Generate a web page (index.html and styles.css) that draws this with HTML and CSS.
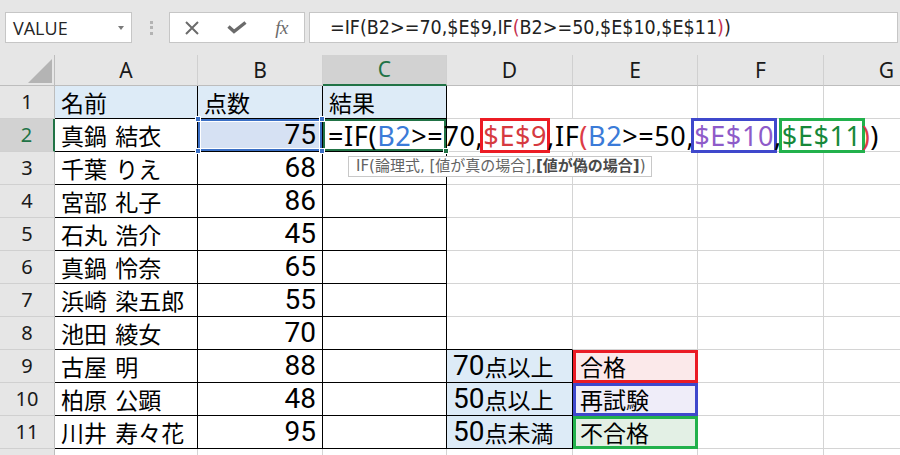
FILE: index.html
```html
<!DOCTYPE html>
<html lang="ja">
<head>
<meta charset="utf-8">
<title>Excel IF</title>
<link rel="stylesheet" href="styles.css">
</head>
<body>
<div class="toolbar">
  <div class="namebox"><span>VALUE</span><span class="caret"></span></div>
  <div class="grip"><i></i><i></i><i></i></div>
  <div class="fbtns">
    <span class="slot"><svg width="16" height="14" viewBox="0 0 16 14"><path d="M2 1 L14 13 M14 1 L2 13" stroke="#6b6b6b" stroke-width="2" fill="none"/></svg></span>
    <span class="slot"><svg width="20" height="13" viewBox="0 0 20 13"><path d="M1.5 5.5 L7 10.5 L18.5 1.5" stroke="#6b6b6b" stroke-width="3.4" fill="none"/></svg></span>
    <span class="slot"><span class="fx">fx</span></span>
  </div>
  <div class="fbar">=IF(B2&gt;=70,$E$9,IF<span class="pr">(</span>B2&gt;=50,$E$10,$E$11<span class="pr">)</span>)</div>
</div>

<div class="sheet">
  <!-- header row -->
  <div class="corner"><span class="tri"></span></div>
  <div class="ch">A</div>
  <div class="ch">B</div>
  <div class="ch sel">C</div>
  <div class="ch">D</div>
  <div class="ch">E</div>
  <div class="ch">F</div>
  <div class="ch">G</div>

  <!-- 1 -->
  <div class="rh">1</div>
  <div class="c t hd">名前</div>
  <div class="c t hd">点数</div>
  <div class="c t hd">結果</div>
  <div class="c"></div><div class="c"></div><div class="c"></div><div class="c"></div>

  <!-- 2 -->
  <div class="rh sel">2</div>
  <div class="c t nm">真鍋 結衣</div>
  <div class="c t num b2">75<i class="hdl tl"></i><i class="hdl tr"></i><i class="hdl bl"></i><i class="hdl br"></i></div>
  <div class="c t f2">
    <div class="formula"><span>=IF(</span><span class="blu">B2</span><span>&gt;=70,</span><span class="ref rr">$E$9</span><span>,IF</span><span class="red">(</span><span class="blu">B2</span><span>&gt;=50,</span><span class="ref rb">$E$10</span><span>,</span><span class="ref rg">$E$11</span><span class="red">)</span><span>)</span></div>
    <i class="fill"></i>
  </div>
  <div class="c nr"></div><div class="c nr"></div><div class="c nr"></div><div class="c nr"></div>

  <!-- 3 -->
  <div class="rh">3</div>
  <div class="c t nm">千葉 りえ</div>
  <div class="c t num">68</div>
  <div class="c t"></div>
  <div class="c"></div><div class="c"></div><div class="c"></div><div class="c"></div>

  <!-- 4 -->
  <div class="rh">4</div>
  <div class="c t nm">宮部 礼子</div>
  <div class="c t num">86</div>
  <div class="c t"></div>
  <div class="c"></div><div class="c"></div><div class="c"></div><div class="c"></div>

  <!-- 5 -->
  <div class="rh">5</div>
  <div class="c t nm">石丸 浩介</div>
  <div class="c t num">45</div>
  <div class="c t"></div>
  <div class="c"></div><div class="c"></div><div class="c"></div><div class="c"></div>

  <!-- 6 -->
  <div class="rh">6</div>
  <div class="c t nm">真鍋 怜奈</div>
  <div class="c t num">65</div>
  <div class="c t"></div>
  <div class="c"></div><div class="c"></div><div class="c"></div><div class="c"></div>

  <!-- 7 -->
  <div class="rh">7</div>
  <div class="c t nm">浜崎 染五郎</div>
  <div class="c t num">55</div>
  <div class="c t"></div>
  <div class="c"></div><div class="c"></div><div class="c"></div><div class="c"></div>

  <!-- 8 -->
  <div class="rh">8</div>
  <div class="c t nm">池田 綾女</div>
  <div class="c t num">70</div>
  <div class="c t"></div>
  <div class="c bb"></div><div class="c"></div><div class="c"></div><div class="c"></div>

  <!-- 9 -->
  <div class="rh">9</div>
  <div class="c t nm">古屋 明</div>
  <div class="c t num">88</div>
  <div class="c t"></div>
  <div class="c t hd"><span class="lat">70</span>点以上</div>
  <div class="c ebox e9">合格</div>
  <div class="c"></div><div class="c"></div>

  <!-- 10 -->
  <div class="rh">10</div>
  <div class="c t nm">柏原 公顕</div>
  <div class="c t num">48</div>
  <div class="c t"></div>
  <div class="c t hd"><span class="lat">50</span>点以上</div>
  <div class="c ebox e10">再試験</div>
  <div class="c"></div><div class="c"></div>

  <!-- 11 -->
  <div class="rh">11</div>
  <div class="c t nm">川井 寿々花</div>
  <div class="c t num">95</div>
  <div class="c t"></div>
  <div class="c t hd"><span class="lat">50</span>点未満</div>
  <div class="c ebox e11">不合格</div>
  <div class="c"></div><div class="c"></div>

  <!-- 12 (cut off by the window) -->
  <div class="rh"></div>
  <div class="c"></div><div class="c"></div><div class="c"></div><div class="c"></div><div class="c"></div><div class="c"></div><div class="c"></div>

  <div class="tip">IF(論理式, [値が真の場合], <b>[値が偽の場合]</b>)</div>
</div>
</body>
</html>
```

FILE: styles.css
```css
* { box-sizing: border-box; }
html, body { margin: 0; padding: 0; }
body {
  width: 900px;
  height: 455px;
  overflow: hidden;
  background: #ffffff;
  font-family: "Noto Sans CJK JP", sans-serif;
}

/* ---------- formula toolbar ---------- */
.toolbar {
  height: 55px;
  background: #e6e6e6;
  display: flex;
  align-items: flex-start;
  padding: 12px 0 0 5px;
}
.namebox {
  width: 127px;
  height: 31px;
  background: #fff;
  border: 1px solid #c6c6c6;
  display: flex;
  align-items: center;
  justify-content: space-between;
  padding: 0 7px 0 7px;
  font: 18px "Open Sans", sans-serif;
  color: #262626;
}
.caret {
  width: 0;
  height: 0;
  border-left: 3.5px solid transparent;
  border-right: 3.5px solid transparent;
  border-top: 4px solid #7a7a7a;
  margin-top: 1px;
}
.grip {
  width: 3px;
  height: 31px;
  margin-left: 18px;
  display: flex;
  flex-direction: column;
  justify-content: center;
  gap: 2.5px;
}
.grip i {
  display: block;
  width: 3px;
  height: 3px;
  background: #b3b3b3;
}
.fbtns {
  width: 136px;
  height: 31px;
  margin-left: 16px;
  background: #fff;
  border: 1px solid #c6c6c6;
  display: flex;
  align-items: center;
}
.slot {
  flex: 1;
  display: flex;
  align-items: center;
  justify-content: center;
}
.fx {
  font: italic 19px "Liberation Serif", serif;
  color: #6b6b6b;
  line-height: 1;
  letter-spacing: -0.5px;
}
.fbar {
  width: 589px;
  height: 31px;
  margin-left: 4px;
  background: #fff;
  border: 1px solid #c6c6c6;
  display: flex;
  align-items: center;
  padding-left: 20px;
  font-family: "DejaVu Sans Condensed", "DejaVu Sans", sans-serif;
  font-stretch: condensed;
  font-size: 19.5px;
  color: #222;
  white-space: nowrap;
}
.fbar .pr { color: #c4314f; }

/* ---------- sheet grid ---------- */
.sheet {
  position: relative;
  width: 900px;
  height: 400px;
  overflow: hidden;
  display: grid;
  grid-template-columns: 55px 143px 125px 124px 126px 125px 126px 126px;
  grid-template-rows: 31px repeat(12, 33px);
}
.corner {
  background: #e6e6e6;
  border-right: 1px solid #bdbdbd;
  border-bottom: 1px solid #bdbdbd;
  display: flex;
  justify-content: flex-end;
  align-items: flex-end;
  padding: 0 2px 2px 0;
}
.tri {
  width: 0;
  height: 0;
  border-left: 24px solid transparent;
  border-bottom: 24px solid #b4b4b4;
}
.ch {
  background: #e6e6e6;
  border-right: 1px solid #d0d0d0;
  border-bottom: 1px solid #bdbdbd;
  display: flex;
  align-items: center;
  justify-content: center;
  font: 21px "Noto Sans", sans-serif;
  line-height: 1;
  color: #1a1a1a;
}
.ch.sel {
  background: #d2d2d2;
  color: #217346;
  border-bottom: 2px solid #217346;
}
.rh {
  background: #e6e6e6;
  border-right: 1px solid #bdbdbd;
  border-bottom: 1px solid #d0d0d0;
  display: flex;
  align-items: center;
  justify-content: center;
  font: 20px "Noto Sans", sans-serif;
  line-height: 1;
  color: #1a1a1a;
}
.rh.sel {
  background: #d2d2d2;
  color: #217346;
  border-right: 2px solid #217346;
}

.c {
  border-right: 1px solid #d4d4d4;
  border-bottom: 1px solid #d4d4d4;
  display: flex;
  align-items: center;
  padding: 0 6px;
  font-size: 23px;
  line-height: 1;
  color: #000;
  white-space: nowrap;
  min-width: 0;
}
.c.t {
  border-right-color: #000;
  border-bottom-color: #000;
}
.c.bb { border-bottom-color: #000; }
.c.nr { border-right-color: transparent; }
.c.hd { background: #ddebf7; }
.c.nm { word-spacing: 3px; }
.c.num {
  justify-content: flex-end;
  font-family: Roboto, "Noto Sans", sans-serif;
  font-size: 28px;
  line-height: 1;
  padding-right: 6px;
}
.lat {
  font-family: Roboto, "Noto Sans", sans-serif;
  font-size: 28px;
}

/* selected B2 */
.b2 {
  position: relative;
  z-index: 3;
  background: #d6e1f3;
  box-shadow: inset 0 0 0 2px #3b6fc5, inset 0 0 0 3px #ffffff;
}
.hdl {
  position: absolute;
  width: 6px;
  height: 6px;
  background: #3b6fc5;
  border: 1px solid #ffffff;
}
.hdl.tl { left: -3px; top: -3px; }
.hdl.tr { right: -3px; top: -3px; }
.hdl.bl { left: -3px; bottom: -3px; }
.hdl.br { right: -3px; bottom: -3px; }

/* active C2 with formula */
.f2 {
  position: relative;
  z-index: 2;
  padding-left: 5px;
  box-shadow: inset 0 0 0 2px #217346;
}
.formula {
  flex: none;
  display: flex;
  align-items: center;
  font-family: "Noto Sans", sans-serif;
  font-size: 27px;
  letter-spacing: 0.6px;
  line-height: 29px;
  color: #000;
}
.formula .blu { color: #3b7bd8; }
.formula .red { color: #dc3c46; }
.ref {
  height: 35px;
  line-height: 29px;
  border: 3px solid;
  margin: 0 -3px;
}
.ref.rr { border-color: #ec1c24; color: #d63a40; }
.ref.rb { border-color: #3f48cc; color: #8e5bc9; }
.ref.rg { border-color: #22b14c; color: #16883a; }
.fill {
  position: absolute;
  right: -3px;
  bottom: -3px;
  width: 6px;
  height: 6px;
  background: #217346;
  border: 1px solid #ffffff;
}

/* lookup boxes */
.ebox {
  border: 3px solid;
  padding-left: 4px;
}
.e9 { background: #fbe9ea; border-color: #ea1b25; }
.e10 { background: #efedf9; border-color: #3f48cc; }
.e11 { background: #e3f0e5; border-color: #22b14c; }

/* tooltip */
.tip {
  position: absolute;
  left: 348px;
  top: 101px;
  width: 304px;
  height: 21px;
  z-index: 5;
  background: #fff;
  border: 1px solid #c8c8c8;
  display: flex;
  align-items: center;
  padding-left: 7px;
  font-family: "DejaVu Sans", "Noto Sans CJK JP", sans-serif;
  font-size: 15px;
  line-height: 1;
  color: #636363;
  white-space: nowrap;
}
.tip b { color: #4a4a4a; }
```
